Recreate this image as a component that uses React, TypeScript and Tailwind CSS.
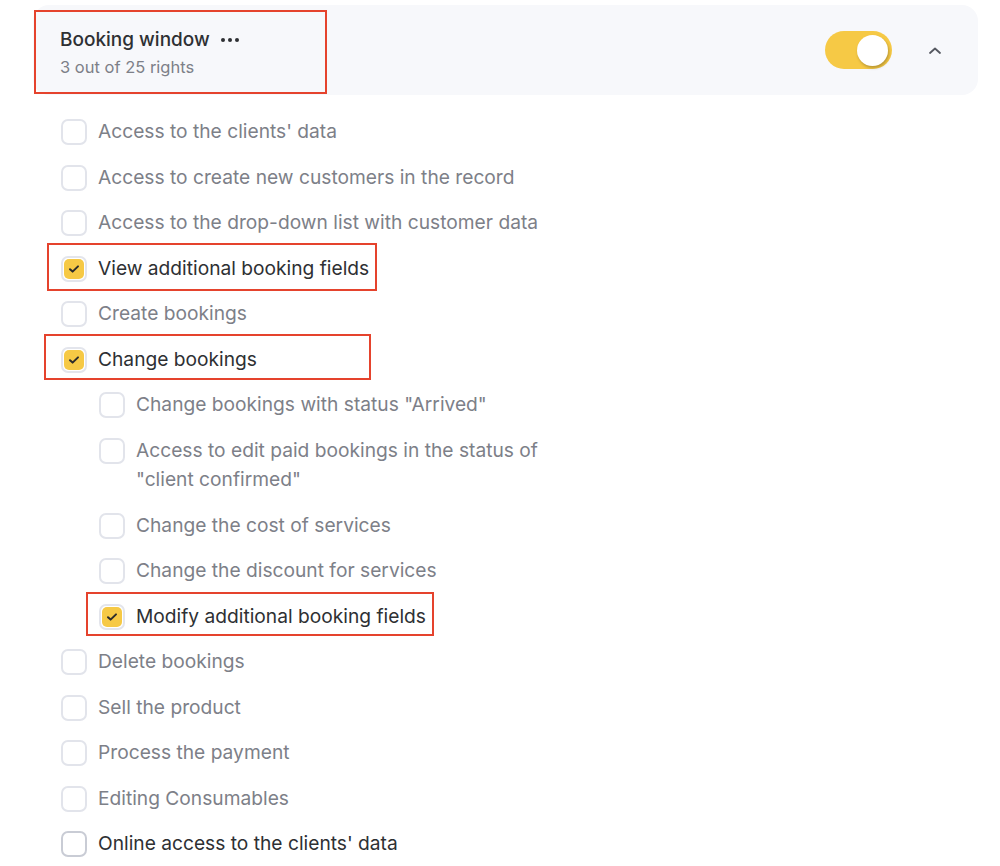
import React from "react";

type Item = { label: string; checked?: boolean; indent?: boolean; dark?: boolean; box?: [number, number, number, number] };

const items: Item[] = [
  { label: "Access to the clients' data" },
  { label: "Access to create new customers in the record" },
  { label: "Access to the drop-down list with customer data" },
  { label: "View additional booking fields", checked: true, box: [-14, -3, 330, 48] },
  { label: "Create bookings" },
  { label: "Change bookings", checked: true, box: [-17, -3, 327, 46] },
  { label: 'Change bookings with status "Arrived"', indent: true },
  { label: 'Access to edit paid bookings in the status of "client confirmed"', indent: true },
  { label: "Change the cost of services", indent: true },
  { label: "Change the discount for services", indent: true },
  { label: "Modify additional booking fields", indent: true, checked: true, box: [-13, -2, 348, 44] },
  { label: "Delete bookings" },
  { label: "Sell the product" },
  { label: "Process the payment" },
  { label: "Editing Consumables" },
  { label: "Online access to the clients' data", dark: true },
];

function Checkbox({ checked, dark }: { checked?: boolean; dark?: boolean }) {
  if (checked) {
    return (
      <div className="mt-[2px] flex h-[26px] w-[26px] shrink-0 items-center justify-center rounded-[7px] border-[2px] border-[#e3e5ec] bg-white p-[1px]">
        <div className="flex h-full w-full items-center justify-center rounded-[5px] bg-[#f6c945]">
          <svg width="12" height="10" viewBox="0 0 12 10" fill="none">
            <path d="M2 5.2L4.6 7.6L10 2.4" stroke="#2b2b2b" strokeWidth="2" strokeLinecap="round" strokeLinejoin="round" />
          </svg>
        </div>
      </div>
    );
  }
  return (
    <div
      className={
        "mt-[2px] h-[26px] w-[26px] shrink-0 rounded-[7px] border-[2px] bg-white " +
        (dark ? "border-[#c9ccd5]" : "border-[#e2e4eb]")
      }
    />
  );
}

export default function App() {
  return (
    <div className="min-h-[866px] w-[1000px] overflow-hidden bg-white pt-[5px]" style={{ fontFamily: "Inter, 'Noto Sans', sans-serif" }}>
      <div className="relative ml-[33px] flex h-[90px] w-[945px] items-center justify-between rounded-[16px] bg-[#f7f8fb] pl-[27px] pr-[36px]">
        <div className="absolute left-[1px] top-[5px] h-[84px] w-[293px] border-[2px] border-[#e5432d]" />
        <div className="flex flex-col pt-[4px]">
          <div className="flex items-center gap-[10px] text-[19px] font-medium leading-[24px] text-[#2e3033]">
            <span>Booking window</span>
            <svg width="20" height="6" viewBox="0 0 20 6" className="mt-[1px]">
              <circle cx="3" cy="3" r="2" fill="#2e3033" />
              <circle cx="10" cy="3" r="2" fill="#2e3033" />
              <circle cx="17" cy="3" r="2" fill="#2e3033" />
            </svg>
          </div>
          <div className="mt-[5px] text-[16.5px] leading-[20px] text-[#7d8088]">3 out of 25 rights</div>
        </div>
        <div className="flex items-center gap-[36px]">
          <div className="flex h-[38px] w-[67px] items-center justify-end rounded-full bg-[#f6c945] pr-[4px]">
            <div className="h-[31px] w-[31px] rounded-full bg-white shadow-[1px_2px_3px_rgba(0,0,0,0.25)]" />
          </div>
          <svg width="14" height="9" viewBox="0 0 14 9" fill="none">
            <path d="M2 7L7 2.5L12 7" stroke="#555860" strokeWidth="1.8" strokeLinecap="round" strokeLinejoin="round" />
          </svg>
        </div>
      </div>

      <div className="mt-[14px] flex flex-col pl-[61px]">
        {items.map((it, i) => (
          <div key={i} className={"flex py-[8px] " + (it.indent ? "pl-[38px]" : "")}>
            <div className="relative flex items-start gap-[11px]">
              {it.box && (
                <div
                  className="absolute border-[2px] border-[#e5432d]"
                  style={{ left: it.box[0], top: it.box[1] - 8, width: it.box[2], height: it.box[3] }}
                />
              )}
              <Checkbox checked={it.checked} dark={it.dark} />
              <span
                className={
                  "text-[19.2px] leading-[29.5px] " +
                  (it.indent ? "max-w-[420px] " : "") +
                  (it.checked || it.dark ? "text-[#2e3033]" : "text-[#7d8088]")
                }
              >
                {it.label}
              </span>
            </div>
          </div>
        ))}
      </div>
    </div>
  );
}
